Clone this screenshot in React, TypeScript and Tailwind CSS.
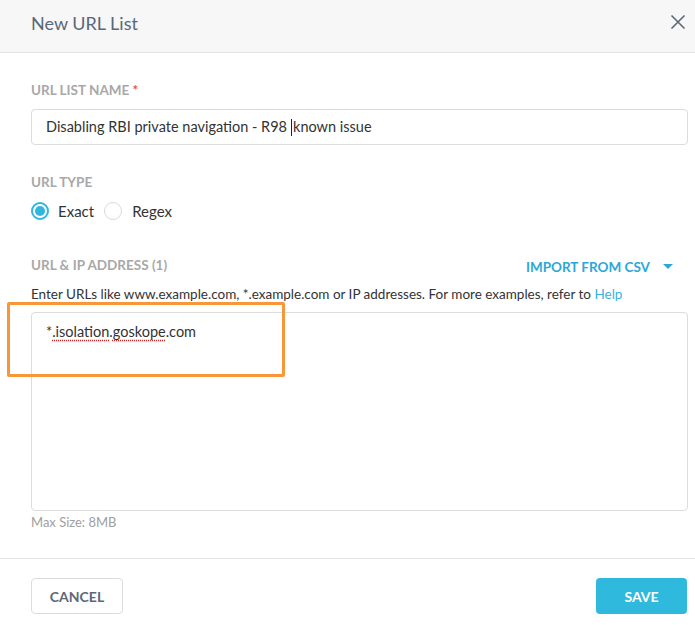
import React from "react";

export default function App() {
  return (
    <div className="relative w-[695px] h-[625px] bg-white font-['Lato','Noto_Sans',sans-serif] overflow-hidden">
      {/* Header */}
      <div className="h-[53px] bg-[#f7f7f7] border-b border-[#e3e3e3] flex items-start justify-between pl-[31px] pr-[9px] pt-[13px]">
        <div className="text-[18px] text-[#5a6878] leading-[20px]">New URL List</div>
        <svg width="16" height="16" viewBox="0 0 16 16" className="text-[#5a6878] mt-[1px]">
          <path d="M1.5 1.5 L14.5 14.5 M14.5 1.5 L1.5 14.5" stroke="currentColor" strokeWidth="1.6" fill="none" />
        </svg>
      </div>

      {/* Body */}
      <div className="pl-[31px] pr-[7px] pt-[29px]">
        <div className="text-[13.5px] leading-[16px] font-bold text-[#a8a8a8]">
          URL LIST NAME <span className="text-[#f05050]">*</span>
        </div>
        <div className="mt-[11px] h-[36px] border border-[#dcdcdc] rounded-[4px] flex items-center pl-[14px] text-[14.5px] text-[#333]">
          <span>Disabling RBI private navigation - R98</span>
          <span className="inline-block w-px h-[17px] bg-[#222] ml-[4px] mr-[1px]" />
          <span>known issue</span>
        </div>

        <div className="mt-[29px] text-[13.5px] leading-[16px] font-bold text-[#a8a8a8]">URL TYPE</div>
        <div className="mt-[11px] h-[20px] flex items-center text-[15px] text-[#333]">
          <span className="w-[18px] h-[18px] rounded-full border-2 border-[#2fb8dc] flex items-center justify-center">
            <span className="w-[10px] h-[10px] rounded-full bg-[#2fb8dc]" />
          </span>
          <span className="ml-[9px]">Exact</span>
          <span className="ml-[10px] w-[18px] h-[18px] rounded-full border border-[#dadada]" />
          <span className="ml-[10px]">Regex</span>
        </div>

        <div className="mt-[36px] h-[16px] flex items-center justify-between">
          <div className="text-[13.5px] leading-[16px] font-bold text-[#a8a8a8]">URL &amp; IP ADDRESS (1)</div>
          <div className="flex items-center mr-[15px] translate-y-[2px] text-[#2aa8d8]">
            <span className="text-[13.5px] font-bold leading-[16px]">IMPORT FROM CSV</span>
            <svg width="10" height="6" viewBox="0 0 10 6" className="ml-[13px]">
              <path d="M0 0 L10 0 L5 5 Z" fill="currentColor" />
            </svg>
          </div>
        </div>
        <div className="mt-[11px] text-[13.5px] leading-[20px] text-[#333]">
          Enter URLs like www.example.com, *.example.com or IP addresses. For more examples, refer to{" "}
          <span className="text-[#35b3e0]">Help</span>
        </div>
        <div className="mt-[8px] h-[199px] border border-[#dcdcdc] rounded-[4px] pl-[14px] pt-[9px] text-[14.5px] text-[#333] leading-[20px]">
          *<span className="underline decoration-dotted decoration-[#e02020] underline-offset-[3px]">.isolation</span>.
          <span className="underline decoration-dotted decoration-[#e02020] underline-offset-[3px]">goskope</span>.com
        </div>
        <div className="mt-[3px] text-[13px] leading-[16px] text-[#a0a0a0]">Max Size: 8MB</div>
      </div>

      <div className="mt-[28px] border-t border-[#e3e3e3]" />

      {/* Footer */}
      <div className="pt-[19px] pl-[31px] pr-[8px] flex justify-between">
        <button className="w-[92px] h-[36px] border border-[#dcdcdc] rounded-[4px] bg-white text-[14px] font-bold text-[#5a6878]">
          CANCEL
        </button>
        <button className="w-[91px] h-[36px] rounded-[4px] bg-[#2fb9dd] text-[14px] font-bold text-white">
          SAVE
        </button>
      </div>

      {/* Orange annotation box */}
      <div className="absolute left-[7px] top-[302px] w-[278px] h-[75px] border-[3px] border-[#f7973a] rounded-[2px]" />
    </div>
  );
}
